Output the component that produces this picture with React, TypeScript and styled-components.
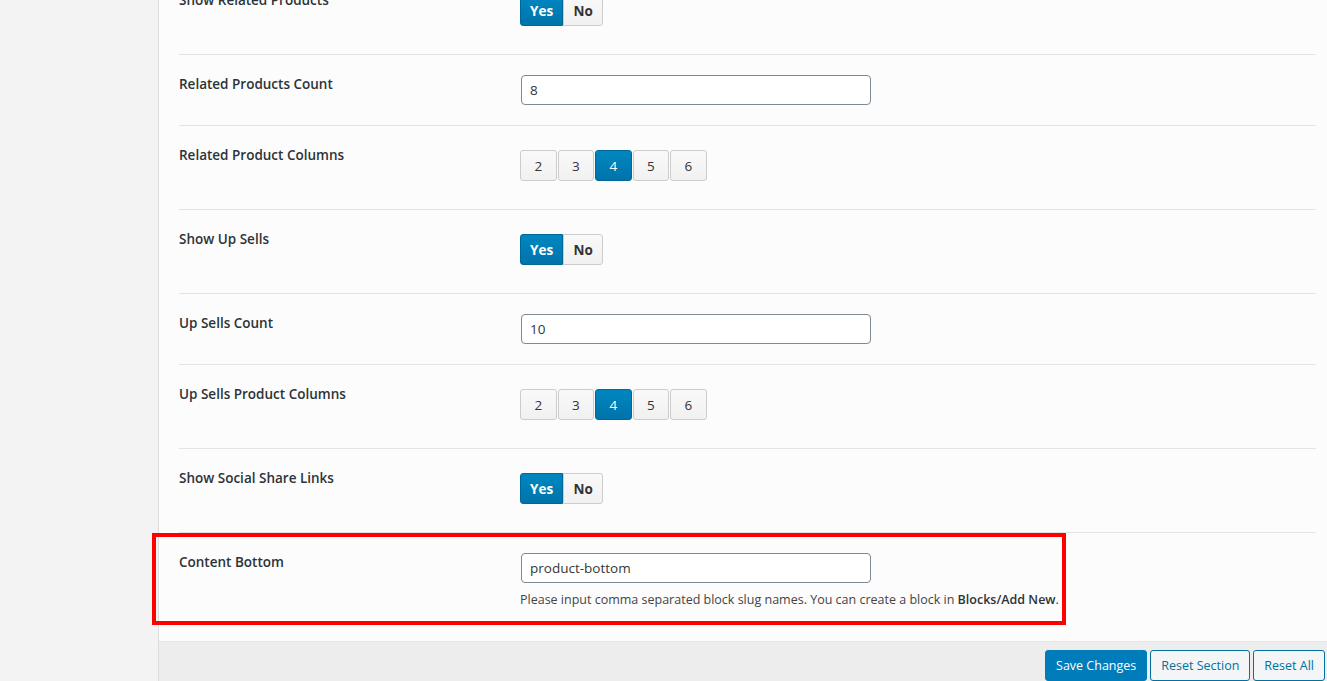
import styled, { createGlobalStyle, css } from "styled-components";

const GlobalStyle = createGlobalStyle`
  html, body {
    margin: 0;
    padding: 0;
    height: 100%;
    overflow: hidden;
  }
  body {
    font-family: "Open Sans", "Noto Sans", sans-serif;
    color: #23282d;
  }
`;

const Screen = styled.div`
  display: flex;
  height: 681px;
  width: 100%;
  background: #f3f3f3;
  overflow: hidden;
`;

const Sidebar = styled.div`
  width: 158px;
  flex-shrink: 0;
  background: #f3f3f3;
  border-right: 1px solid #dcdcdc;
`;

const Main = styled.div`
  flex: 1;
  min-width: 0;
  display: flex;
  flex-direction: column;
`;

const Panel = styled.div`
  flex: 1;
  min-height: 0;
  background: #fcfcfc;
  padding: 0 11px 0 20px;
`;

// the options list is scrolled down a little, so the first row is cut
const Rows = styled.div`
  margin-top: -29px;
`;

const Row = styled.div<{ $last?: boolean }>`
  position: relative;
  display: flex;
  align-items: flex-start;
  border-bottom: ${(p) => (p.$last ? "none" : "1px solid #e4e4e4")};
  padding: 20px 0 ${(p) => (p.$last ? "16px" : "20px")};
`;

const Label = styled.div`
  width: 341px;
  flex-shrink: 0;
  font-size: 13.5px;
  font-weight: 600;
  line-height: 20px;
  margin-top: -1px;
  color: #2c3338;
`;

const Field = styled.div`
  display: flex;
  flex-direction: column;
`;

const TextInput = styled.input`
  box-sizing: border-box;
  width: 350px;
  height: 30px;
  margin-left: 1px;
  padding: 0 8px;
  border: 1px solid #7e8993;
  border-radius: 4px;
  background: #fff;
  font-family: inherit;
  font-size: 13.5px;
  color: #32373c;
  outline: none;
`;

const Hint = styled.p`
  margin: 8px 0 0;
  font-size: 12.5px;
  line-height: 18px;
  color: #444;

  strong {
    font-weight: 600;
    color: #2c3338;
  }
`;

const ButtonSet = styled.div<{ $joined?: boolean }>`
  display: flex;
  gap: ${(p) => (p.$joined ? "0" : "1px")};
  margin: 4px 0 8px;
`;

const activeLook = css`
  background: linear-gradient(#0087c0, #0073aa);
  border-color: #006799;
  color: #fff;
`;

const SetButton = styled.button<{ $active?: boolean; $bold?: boolean; $pos?: "first" | "last" }>`
  box-sizing: border-box;
  height: 31px;
  min-width: ${(p) => (p.$bold ? "40px" : "36.5px")};
  padding: 0 ${(p) => (p.$bold ? "9px" : "0")};
  border: 1px solid #cccccc;
  border-radius: ${(p) =>
    p.$pos === "first" ? "3px 0 0 3px" : p.$pos === "last" ? "0 3px 3px 0" : "3px"};
  background: linear-gradient(#f9f9f9, #f1f1f1);
  font-family: inherit;
  font-size: 13.5px;
  font-weight: ${(p) => (p.$bold ? 700 : 400)};
  color: #333;
  cursor: pointer;
  ${(p) => p.$active && activeLook}
`;

const Highlight = styled.div`
  position: absolute;
  left: -27px;
  top: 0;
  width: 914px;
  height: 92px;
  box-sizing: border-box;
  border: 4px solid #ff0000;
  pointer-events: none;
`;

const Footer = styled.div`
  height: 40px;
  flex-shrink: 0;
  box-sizing: border-box;
  background: #ededed;
  border-top: 1px solid #e6e6e6;
  display: flex;
  justify-content: flex-end;
  align-items: flex-start;
  gap: 3px;
  padding: 8px 2px 0 0;
`;

const ActionButton = styled.button<{ $primary?: boolean }>`
  box-sizing: border-box;
  height: 31px;
  padding: 0 10px;
  border-radius: 3px;
  font-family: inherit;
  font-size: 12.5px;
  line-height: 29px;
  cursor: pointer;
  border: 1px solid ${(p) => (p.$primary ? "#007cba" : "#0071a1")};
  background: ${(p) => (p.$primary ? "#007cba" : "#f3f5f6")};
  color: ${(p) => (p.$primary ? "#fff" : "#0071a1")};
`;

const YesNo = ({ value }: { value: boolean }) => (
  <ButtonSet $joined>
    <SetButton $bold $pos="first" $active={value}>
      Yes
    </SetButton>
    <SetButton $bold $pos="last" $active={!value}>
      No
    </SetButton>
  </ButtonSet>
);

const Columns = ({ value }: { value: number }) => (
  <ButtonSet>
    {[2, 3, 4, 5, 6].map((n) => (
      <SetButton key={n} $active={n === value}>
        {n}
      </SetButton>
    ))}
  </ButtonSet>
);

export default function App() {
  return (
    <>
      <GlobalStyle />
      <Screen>
        <Sidebar />
        <Main>
          <Panel>
            <Rows>
              <Row>
                <Label>Show Related Products</Label>
                <Field>
                  <YesNo value />
                </Field>
              </Row>
              <Row>
                <Label>Related Products Count</Label>
                <Field>
                  <TextInput defaultValue="8" />
                </Field>
              </Row>
              <Row>
                <Label>Related Product Columns</Label>
                <Field>
                  <Columns value={4} />
                </Field>
              </Row>
              <Row>
                <Label>Show Up Sells</Label>
                <Field>
                  <YesNo value />
                </Field>
              </Row>
              <Row>
                <Label>Up Sells Count</Label>
                <Field>
                  <TextInput defaultValue="10" />
                </Field>
              </Row>
              <Row>
                <Label>Up Sells Product Columns</Label>
                <Field>
                  <Columns value={4} />
                </Field>
              </Row>
              <Row>
                <Label>Show Social Share Links</Label>
                <Field>
                  <YesNo value />
                </Field>
              </Row>
              <Row $last>
                <Highlight />
                <Label>Content Bottom</Label>
                <Field>
                  <TextInput defaultValue="product-bottom" />
                  <Hint>
                    Please input comma separated block slug names. You can create a block in{" "}
                    <strong>Blocks/Add New</strong>.
                  </Hint>
                </Field>
              </Row>
            </Rows>
          </Panel>
          <Footer>
            <ActionButton $primary>Save Changes</ActionButton>
            <ActionButton>Reset Section</ActionButton>
            <ActionButton>Reset All</ActionButton>
          </Footer>
        </Main>
      </Screen>
    </>
  );
}
